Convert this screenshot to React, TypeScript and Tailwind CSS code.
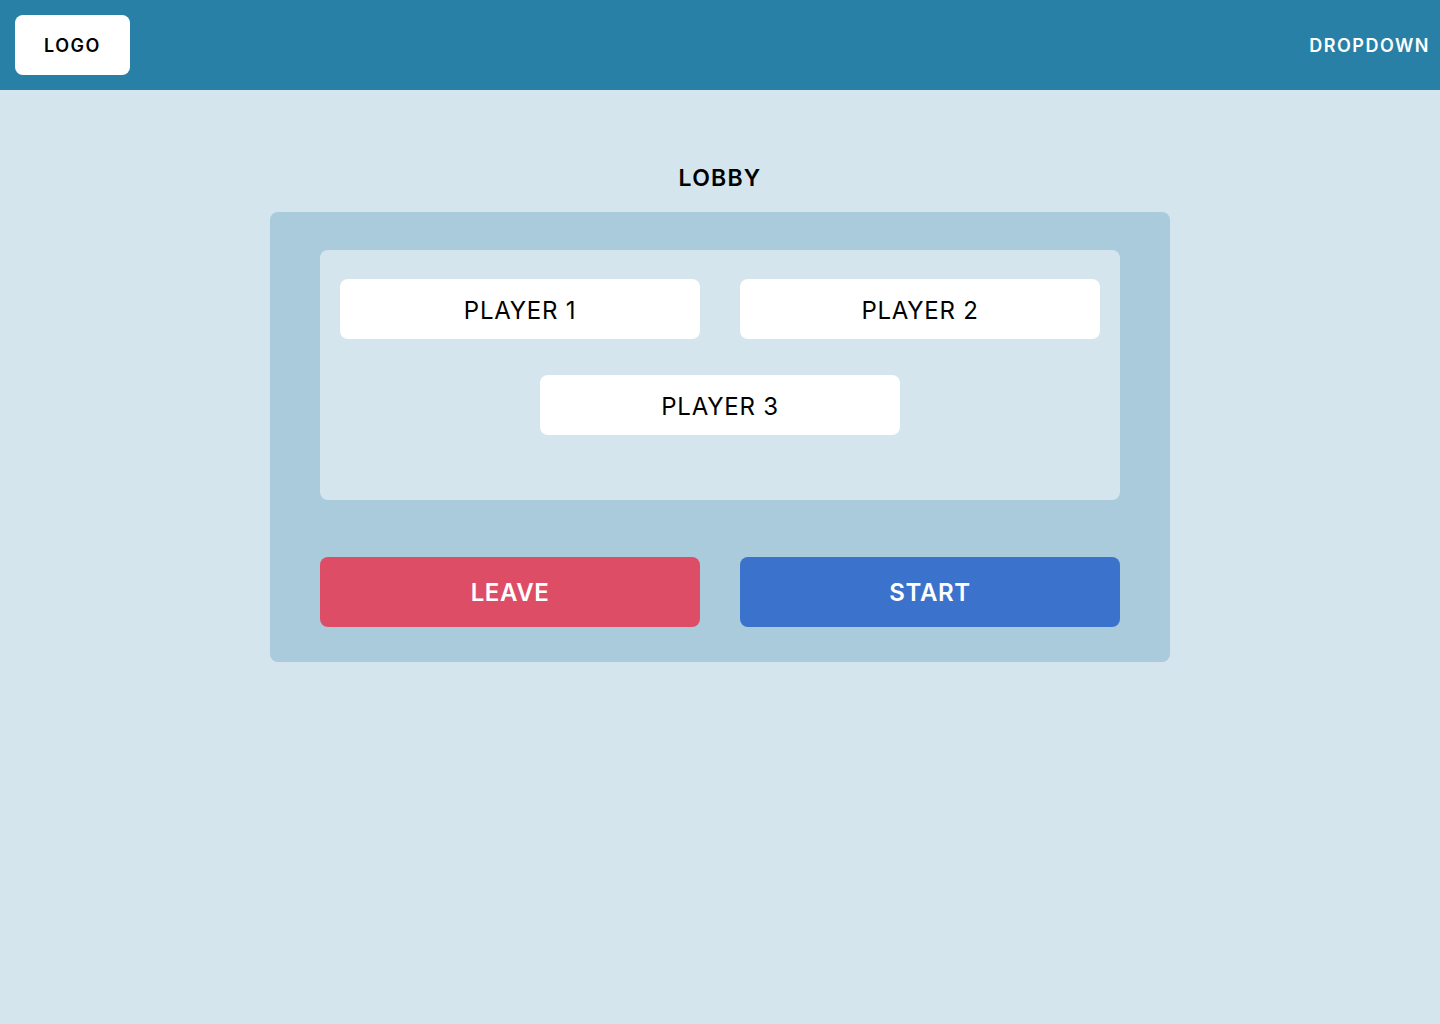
import React from 'react';

const PlayerSlot: React.FC<{ name: string }> = ({ name }) => (
    <div className="w-[360px] h-[60px] bg-white rounded-lg flex items-center justify-center pt-[3px] text-2xl text-black tracking-[0.75px]">
        {name}
    </div>
);

const App: React.FC = () => {
    return (
        <div className="min-h-screen h-[1024px] bg-[#d4e5ed] font-['Inter',sans-serif]">
            <header className="h-[90px] bg-[#2980a6] flex items-center justify-between pl-[15px] pr-[10px]">
                <div className="w-[115px] h-[60px] bg-white rounded-lg flex items-center justify-center pt-[2px] text-lg font-semibold text-black tracking-[1.5px]">
                    LOGO
                </div>
                <button className="text-lg font-semibold text-white tracking-[1.5px] pt-[2px]">DROPDOWN</button>
            </header>

            <main className="flex flex-col items-center pt-[62px]">
                <h1 className="text-[23px] font-semibold text-black leading-[52px] mb-[8px] h-[52px] flex items-center tracking-[1.2px]">LOBBY</h1>
                <div className="w-[900px] bg-[#aacbdc] rounded-lg px-[50px] pt-[38px] pb-[35px]">
                    <div className="h-[250px] bg-[#d4e5ed] rounded-lg px-5 pt-[29px]">
                        <div className="flex justify-between">
                            <PlayerSlot name="PLAYER 1" />
                            <PlayerSlot name="PLAYER 2" />
                        </div>
                        <div className="flex justify-center mt-9">
                            <PlayerSlot name="PLAYER 3" />
                        </div>
                    </div>
                    <div className="flex justify-between mt-[57px]">
                        <button className="w-[380px] h-[70px] rounded-lg bg-[#dd4e66] text-white text-2xl font-semibold tracking-[0.6px] pt-[2px]">
                            LEAVE
                        </button>
                        <button className="w-[380px] h-[70px] rounded-lg bg-[#3b72cc] text-white text-2xl font-semibold tracking-[0.6px] pt-[2px]">
                            START
                        </button>
                    </div>
                </div>
            </main>
        </div>
    );
};

export default App;
